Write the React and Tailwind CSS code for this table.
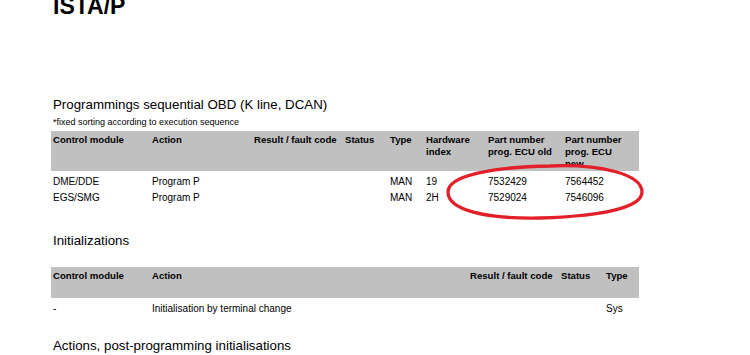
const progCols = "grid grid-cols-[99px_102px_91px_45px_36px_62px_77px_76px]";
const initCols = "grid grid-cols-[99px_318px_91px_45px_35px]";

const progHead = [
  "Control module",
  "Action",
  "Result / fault code",
  "Status",
  "Type",
  "Hardware index",
  "Part number prog. ECU old",
  "Part number prog. ECU new",
];

const progRows = [
  ["DME/DDE", "Program P", "", "", "MAN", "19", "7532429", "7564452"],
  ["EGS/SMG", "Program P", "", "", "MAN", "2H", "7529024", "7546096"],
];

const initHead = ["Control module", "Action", "Result / fault code", "Status", "Type"];
const initRows = [["-", "Initialisation by terminal change", "", "", "Sys"]];

function Table({ cols, head, rows, headH, narrowLast }) {
  return (
    <div className="ml-[51px] w-[588px]">
      <div className={`${cols} bg-[#c0c0c0] overflow-hidden ${headH}`}>
        {head.map((h, i) => (
          <div
            key={i}
            className={
              narrowLast && i === head.length - 1
                ? "pl-[2px] pr-[12px] pt-[3px] text-[9.6px] leading-[12px] font-bold text-black"
                : "px-[2px] pt-[3px] text-[9.6px] leading-[12px] font-bold text-black"
            }
          >
            {h}
          </div>
        ))}
      </div>
      <div className="mt-[2.5px]">
        {rows.map((r, i) => (
          <div key={i} className={cols}>
            {r.map((c, j) => (
              <div key={j} className="px-[2px] text-[10px] leading-[16px] text-black whitespace-nowrap">
                {c}
              </div>
            ))}
          </div>
        ))}
      </div>
    </div>
  );
}

export default function App() {
  return (
    <div className="relative w-[750px] h-[355px] overflow-hidden bg-white font-['Liberation_Sans',Arial,sans-serif] text-black">
      <h1 className="pl-[53px] -mt-[5px] text-[23px] leading-[22px] font-bold">ISTA/P</h1>

      <h2 className="pl-[53px] mt-[80px] text-[13.3px] leading-[16px]">
        Programmings sequential OBD (K line, DCAN)
      </h2>
      <p className="pl-[53px] mt-[4px] text-[9px] leading-[11px]">
        *fixed sorting according to execution sequence
      </p>

      <div className="mt-[3px]">
        <Table cols={progCols} head={progHead} rows={progRows} headH="h-[40px]" narrowLast />
      </div>

      <h2 className="pl-[53px] mt-[27px] text-[13.3px] leading-[16px]">Initializations</h2>

      <div className="mt-[18.6px]">
        <Table cols={initCols} head={initHead} rows={initRows} headH="h-[31px]" />
      </div>

      <h2 className="pl-[53px] mt-[21px] text-[13.3px] leading-[16px]">
        Actions, post-programming initialisations
      </h2>

      {/* red marker drawn over the part numbers */}
      <svg
        className="absolute left-[440px] top-[158px] pointer-events-none"
        width="212"
        height="68"
        viewBox="0 0 212 68"
      >
        <path
          d="M 110 8 C 160 6 202 16 202 34 C 202 50 160 58 100 60 C 45 61 8 52 8 34 C 8 18 50 9 110 8 Z"
          fill="none"
          stroke="#e3202a"
          strokeWidth="3.3"
        />
      </svg>
    </div>
  );
}
